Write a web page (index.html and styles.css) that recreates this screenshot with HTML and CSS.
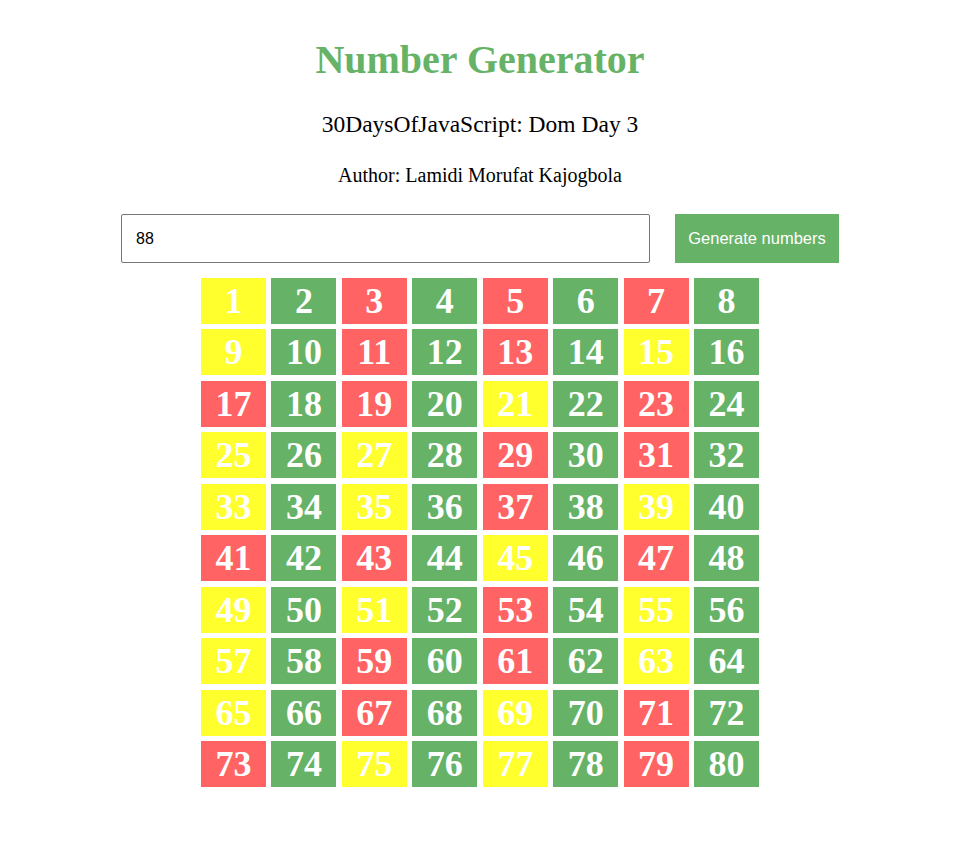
FILE: index.html
```html
<!DOCTYPE html>
<html lang="en">
<head>
<meta charset="utf-8">
<title>Number Generator</title>
<link rel="stylesheet" href="styles.css">
</head>
<body>
<div class="page">
  <h1 class="title">Number Generator</h1>
  <h2 class="subtitle">30DaysOfJavaScript: Dom Day 3</h2>
  <p class="author">Author: Lamidi Morufat Kajogbola</p>
  <div class="controls">
    <input class="num-input" type="text" value="88">
    <button class="gen-btn" type="button">Generate numbers</button>
  </div>
  <div class="grid">
    <div class="cell y">1</div><div class="cell g">2</div><div class="cell r">3</div><div class="cell g">4</div><div class="cell r">5</div><div class="cell g">6</div><div class="cell r">7</div><div class="cell g">8</div>
    <div class="cell y">9</div><div class="cell g">10</div><div class="cell r">11</div><div class="cell g">12</div><div class="cell r">13</div><div class="cell g">14</div><div class="cell y">15</div><div class="cell g">16</div>
    <div class="cell r">17</div><div class="cell g">18</div><div class="cell r">19</div><div class="cell g">20</div><div class="cell y">21</div><div class="cell g">22</div><div class="cell r">23</div><div class="cell g">24</div>
    <div class="cell y">25</div><div class="cell g">26</div><div class="cell y">27</div><div class="cell g">28</div><div class="cell r">29</div><div class="cell g">30</div><div class="cell r">31</div><div class="cell g">32</div>
    <div class="cell y">33</div><div class="cell g">34</div><div class="cell y">35</div><div class="cell g">36</div><div class="cell r">37</div><div class="cell g">38</div><div class="cell y">39</div><div class="cell g">40</div>
    <div class="cell r">41</div><div class="cell g">42</div><div class="cell r">43</div><div class="cell g">44</div><div class="cell y">45</div><div class="cell g">46</div><div class="cell r">47</div><div class="cell g">48</div>
    <div class="cell y">49</div><div class="cell g">50</div><div class="cell y">51</div><div class="cell g">52</div><div class="cell r">53</div><div class="cell g">54</div><div class="cell y">55</div><div class="cell g">56</div>
    <div class="cell y">57</div><div class="cell g">58</div><div class="cell r">59</div><div class="cell g">60</div><div class="cell r">61</div><div class="cell g">62</div><div class="cell y">63</div><div class="cell g">64</div>
    <div class="cell y">65</div><div class="cell g">66</div><div class="cell r">67</div><div class="cell g">68</div><div class="cell y">69</div><div class="cell g">70</div><div class="cell r">71</div><div class="cell g">72</div>
    <div class="cell r">73</div><div class="cell g">74</div><div class="cell y">75</div><div class="cell g">76</div><div class="cell y">77</div><div class="cell g">78</div><div class="cell r">79</div><div class="cell g">80</div>
  </div>
</div>
</body>
</html>
```
FILE: styles.css
```css
html, body {
  margin: 0;
  padding: 0;
  background: #ffffff;
}

body {
  font-family: "Liberation Serif", "Times New Roman", serif;
  color: #000000;
}

.page {
  display: flex;
  flex-direction: column;
  align-items: center;
}

.title {
  margin: 38px 0 0;
  font-size: 40px;
  line-height: 44px;
  font-weight: bold;
  color: #66b266;
}

.subtitle {
  margin: 29px 0 0;
  font-size: 23.5px;
  line-height: 26px;
  font-weight: normal;
}

.author {
  margin: 27px 0 0;
  font-size: 20px;
  line-height: 22px;
}

.controls {
  margin-top: 28px;
  display: flex;
  gap: 25px;
}

.num-input {
  box-sizing: border-box;
  width: 529px;
  height: 49px;
  padding: 0 14px;
  border: 1px solid #767676;
  border-radius: 2px;
  font-family: "Liberation Sans", Arial, sans-serif;
  font-size: 16px;
  color: #000000;
  outline: none;
}

.gen-btn {
  box-sizing: border-box;
  width: 164px;
  height: 49px;
  padding: 0 12px;
  border: none;
  background: #66b266;
  color: #ffffff;
  font-family: "Liberation Sans", Arial, sans-serif;
  font-size: 16.5px;
}

.grid {
  margin-top: 15px;
  display: grid;
  grid-template-columns: repeat(8, 65px);
  grid-auto-rows: 46px;
  column-gap: 5.43px;
  row-gap: 5.44px;
}

.cell {
  display: flex;
  align-items: center;
  justify-content: center;
  color: #ffffff;
  font-size: 36px;
  font-weight: bold;
}

.g { background: #66b266; }
.r { background: #ff6363; }
.y { background: #ffff2d; }
```
